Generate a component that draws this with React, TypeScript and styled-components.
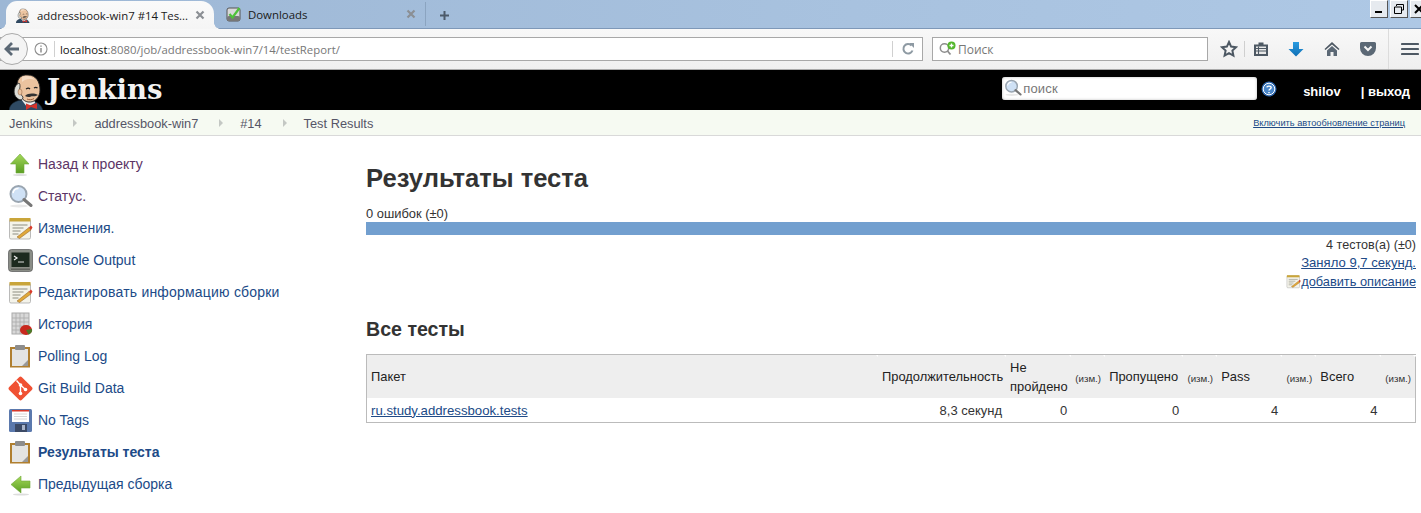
import React from "react";
import styled, { createGlobalStyle } from "styled-components";

const Global = createGlobalStyle`
  html, body { margin: 0; padding: 0; background: #fff; overflow: hidden; }
  body { font-family: "Liberation Sans", Arial, sans-serif; font-size: 13px; color: #333; }
  * { box-sizing: border-box; }
`;

const Page = styled.div`
  width: 1421px;
  height: 513px;
  overflow: hidden;
  display: flex;
  flex-direction: column;
`;

/* ---------- browser chrome ---------- */
const TabStrip = styled.div`
  height: 29px;
  flex: none;
  display: flex;
  align-items: flex-end;
  padding-left: 6px;
  background: linear-gradient(90deg, #9db7d5 0%, #a8c2df 60%, #aec8e5 100%);
  border-bottom: 1px solid #7e98b8;
  position: relative;
`;
const Tab = styled.div<{ $active?: boolean }>`
  position: relative;
  height: 28px;
  margin-bottom: ${(p) => (p.$active ? "-1px" : "0")};
  width: ${(p) => (p.$active ? "208px" : "199px")};
  margin-right: ${(p) => (p.$active ? "8px" : "0")};
  display: flex;
  align-items: center;
  padding-left: ${(p) => (p.$active ? "10px" : "4px")};
  padding-right: ${(p) => (p.$active ? "9px" : "5px")};
  gap: 6px;
  background: ${(p) => (p.$active ? "linear-gradient(#fafafa, #f5f5f5)" : "transparent")};
  border-radius: ${(p) => (p.$active ? "11px 13px 0 0" : "0")};
  font-family: "Open Sans", "Noto Sans", sans-serif;
  font-size: 11.4px;
  color: #1a1a1a;
  white-space: nowrap;
  ${(p) =>
    p.$active &&
    `
    &::before, &::after {
      content: "";
      position: absolute;
      bottom: 0;
      width: 6px;
      height: 6px;
    }
    &::before {
      left: -6px;
      background: radial-gradient(circle at 0 0, transparent 5.5px, #f5f5f5 6px);
    }
    &::after {
      right: -6px;
      background: radial-gradient(circle at 100% 0, transparent 5.5px, #f5f5f5 6px);
    }
  `}
`;
const TabTitle = styled.span`
  flex: 1;
`;
const TabDivider = styled.div`
  width: 1px;
  height: 24px;
  margin: 0 0 2px 4px;
  background: #8ba4c0;
`;
const NewTab = styled.div`
  width: 36px;
  height: 26px;
  display: flex;
  align-items: center;
  justify-content: center;
`;
const WindowControls = styled.div`
  position: absolute;
  top: 0;
  right: -7px;
  display: flex;
  gap: 2px;
`;
const WinBtn = styled.div`
  width: 18px;
  height: 18px;
  display: flex;
  align-items: center;
  justify-content: center;
  background: #e6eaef;
  border: 1px solid;
  border-color: #fff #555 #555 #fff;
`;
const NavBar = styled.div`
  height: 41px;
  flex: none;
  display: flex;
  align-items: center;
  background: linear-gradient(#f8f8f8, #efefef);
  border-bottom: 1px solid #a9a9a9;
  position: relative;
`;
const BackBtn = styled.div`
  position: absolute;
  left: -4px;
  top: 4px;
  width: 32px;
  height: 32px;
  border-radius: 50%;
  background: #f4f4f4;
  border: 1px solid #aaa;
  display: flex;
  align-items: center;
  justify-content: center;
  z-index: 1;
`;
const AddressBox = styled.div`
  width: 923px;
  height: 24px;
  background: #fff;
  border: 1px solid #a8a8a8;
  display: flex;
  align-items: center;
  padding-left: 33px;
  font-family: "Open Sans", "Noto Sans", sans-serif;
  font-size: 11.35px;
  color: #777;
`;
const InfoSlot = styled.div`
  width: 21px;
  height: 16px;
  display: flex;
  align-items: center;
  border-right: 1px solid #d0d0d0;
  margin-right: 5px;
  flex: none;
`;
const Host = styled.span`
  color: #111;
`;
const UrlText = styled.span`
  flex: 1;
`;
const ReloadSlot = styled.div`
  width: 30px;
  height: 16px;
  border-left: 1px solid #d0d0d0;
  display: flex;
  align-items: center;
  justify-content: center;
`;
const SearchBox = styled.div`
  margin-left: 9px;
  width: 276px;
  height: 24px;
  background: #fff;
  border: 1px solid #a8a8a8;
  display: flex;
  align-items: center;
  padding-left: 6px;
  gap: 1px;
  font-family: "Open Sans", "Noto Sans", sans-serif;
  font-size: 12px;
  color: #777;
`;
const ToolIcons = styled.div`
  display: flex;
  align-items: center;
  margin-left: 11px;
  height: 100%;
`;
const ToolSlot = styled.div<{ $w: number }>`
  width: ${(p) => p.$w}px;
  height: 20px;
  display: flex;
  align-items: center;
  justify-content: center;
`;
const MenuSlot = styled.div`
  width: 33px;
  height: 100%;
  display: flex;
  align-items: center;
  padding-left: 12px;
  border-left: 1px solid #dcdcdc;
`;
const ThinSep = styled.div`
  width: 1px;
  height: 16px;
  margin-left: 5px;
  background: #cfcfcf;
`;

/* ---------- jenkins header ---------- */
const Header = styled.div`
  height: 40px;
  flex: none;
  background: #000;
  display: flex;
  align-items: center;
  padding-left: 9px;
  color: #fff;
`;
const Logo = styled.div`
  width: 38px;
  height: 40px;
  flex: none;
  overflow: hidden;
`;
const Brand = styled.div`
  font-family: "DejaVu Serif", "Liberation Serif", serif;
  font-weight: 700;
  font-size: 27.5px;
  color: #f2f2f2;
  margin-top: -2px;
`;
const HeaderSearch = styled.div`
  margin-left: auto;
  width: 255px;
  height: 23px;
  margin-top: -4px;
  background: #fff;
  border-radius: 3px;
  box-shadow: inset 0 0 3px #bbb;
  display: flex;
  align-items: center;
  padding-left: 2px;
  gap: 1px;
  font-size: 13px;
  color: #777;
  letter-spacing: 0.2px;
`;
const HelpDot = styled.div`
  margin-left: 4px;
  width: 16px;
  height: 16px;
  margin-top: -2px;
  flex: none;
`;
const UserName = styled.a`
  margin-left: 26px;
  font-size: 13px;
  font-weight: 700;
  color: #fff;
  margin-top: 3px;
`;
const Logout = styled.a`
  margin-left: 20px;
  margin-right: 11px;
  margin-top: 3px;
  font-size: 13px;
  font-weight: 700;
  color: #fff;
`;

/* ---------- breadcrumbs ---------- */
const Crumbs = styled.div`
  height: 26px;
  flex: none;
  background: #f6faf2;
  border-bottom: 1px solid #d9d9d9;
  display: flex;
  align-items: center;
  padding: 1px 16px 0 9px;
`;
const Crumb = styled.span`
  font-size: 12.8px;
  color: #555566;
`;
const CrumbArrow = styled.span`
  width: 0;
  height: 0;
  margin: 0 17px 0 21px;
  border-left: 4px solid #c4c8c4;
  border-top: 4px solid transparent;
  border-bottom: 4px solid transparent;
`;
const AutoRefresh = styled.a`
  margin-left: auto;
  font-size: 9.25px;
  color: #204a87;
  text-decoration: underline;
`;

/* ---------- body ---------- */
const Body = styled.div`
  flex: 1;
  display: flex;
  min-height: 0;
`;
const Side = styled.nav`
  width: 366px;
  flex: none;
  padding: 12px 0 0 8px;
  display: flex;
  flex-direction: column;
`;
const SideItem = styled.div`
  height: 32px;
  display: flex;
  align-items: center;
  gap: 5px;
`;
const SideIcon = styled.div`
  width: 25px;
  height: 25px;
  flex: none;
`;
const SideLink = styled.a<{ $visited?: boolean; $bold?: boolean; $wide?: boolean }>`
  font-size: 14px;
  color: ${(p) => (p.$visited ? "#5c3566" : "#204a87")};
  font-weight: ${(p) => (p.$bold ? 700 : 400)};
  letter-spacing: ${(p) => (p.$wide ? "0.2px" : "0")};
`;
const Main = styled.main`
  flex: 1;
  padding: 27px 5px 0 0;
  min-width: 0;
`;
const Title = styled.h1`
  margin: 0 0 14px;
  font-size: 25.6px;
  line-height: 30px;
  font-weight: 700;
  color: #333;
`;
const Fails = styled.div`
  font-size: 12.9px;
  line-height: 14px;
  margin-bottom: 1px;
  color: #333;
`;
const Bar = styled.div`
  height: 13px;
  margin-bottom: -1px;
  background: #729fcf;
`;
const RightLine = styled.div<{ $top?: number }>`
  margin-top: ${(p) => p.$top ?? 3}px;
  height: 15px;
  display: flex;
  justify-content: flex-end;
  align-items: center;
  font-size: 12.6px;
  color: #333;
`;
const Lnk = styled.a<{ $size?: number }>`
  color: #204a87;
  text-decoration: underline;
  font-size: ${(p) => p.$size ?? 13}px;
`;
const H2 = styled.h2`
  margin: 28px 0 13px;
  font-size: 19.6px;
  line-height: 24px;
  font-weight: 700;
  color: #333;
`;
const Table = styled.table`
  width: 1050px;
  table-layout: fixed;
  border-collapse: collapse;
  border: 1px solid #bbb;
  font-size: 13px;
  color: #333;
`;
const Th = styled.th<{ $right?: boolean }>`
  background: #eee;
  height: 43px;
  padding: 1px 4px 0;
  font-weight: 400;
  font-size: 12.9px;
  line-height: 19px;
  text-align: ${(p) => (p.$right ? "right" : "left")};
  color: #222;
  position: relative;
  &::before {
    content: "";
    position: absolute;
    top: 0;
    right: -2px;
    border-left: 2px solid transparent;
    border-right: 2px solid transparent;
    border-top: 2px solid #fff;
  }
`;
const SmallTh = styled(Th)`
  font-size: 9.7px;
  white-space: nowrap;
  padding: 5px 2px 0;
  text-align: center;
  color: #333;
`;
const Td = styled.td<{ $right?: boolean }>`
  height: 25px;
  padding: 1px 4px 0;
  text-align: ${(p) => (p.$right ? "right" : "left")};
`;

/* ---------- icons ---------- */
const JenkinsHead = ({ size = 38 }: { size?: number }) => (
  <svg width={size} height={(size * 41) / 38} viewBox="0 0 38 41">
    <path d="M0 41C0 35 5 31 12 30L24 31C29 32 33 36 34 41Z" fill="#2f4a63" stroke="#16242f" strokeWidth=".6" />
    <path d="M12 29L18 37L26 33L25 29Z" fill="#eee" />
    <path d="M17 33.500L22 35.500L28 33V39L22 37L17 40Z" fill="#d5332b" />
    <path d="M9 20C6 9 12 4 19 5C27 5 31 12 31 20C31 27 26 33 19 32C14 31 11 27 9 20Z" fill="#ebc39f" stroke="#222" strokeWidth=".9" />
    <path d="M10 13C5 15 3 24 8 28C11 31 14 30 14 27C11 24 10 20 11 17C11 15 11 14 10 13Z" fill="#dcdcd6" stroke="#222" strokeWidth=".8" />
    <ellipse cx="11" cy="22" rx="2" ry="3" fill="#ebc39f" stroke="#8a5a3a" strokeWidth=".5" />
    <path d="M13 7C17 5 23 6 26 10C21 8 16 9 13 12Z" fill="#f5dcc4" />
    <path d="M17 19c1.500-1 3-1 4 0M25 18c1-.8 2.500-.8 3.500 0" stroke="#222" strokeWidth="1.200" fill="none" />
    <path d="M16 26C19 23 25 23 29 25C26 27 23 26 22 26.500C20 27.500 18 27 16 26Z" fill="#333" />
    <path d="M18 29c2 1 5 1 7-.5" stroke="#8a4a2a" strokeWidth=".8" fill="none" />
  </svg>
);
const ArrowUp = () => (
  <svg width="25" height="25" viewBox="0 0 25 25">
    <defs><linearGradient id="gu" x1="0" y1="0" x2="0" y2="1"><stop offset="0" stopColor="#a4d85a" /><stop offset="1" stopColor="#5a9e22" /></linearGradient></defs>
    <path d="M12 2L21 12H16V21H8V12H2.500z" fill="url(#gu)" stroke="#6ea83a" strokeWidth=".6" />
    <ellipse cx="12" cy="23" rx="7" ry="1" fill="#ddd" />
  </svg>
);
const ArrowLeft = () => (
  <svg width="25" height="25" viewBox="0 0 25 25">
    <defs><linearGradient id="gl" x1="0" y1="0" x2="0" y2="1"><stop offset="0" stopColor="#a4d85a" /><stop offset="1" stopColor="#5a9e22" /></linearGradient></defs>
    <path d="M3 12.500L13 4V9H22V16H13V21z" fill="url(#gl)" stroke="#6ea83a" strokeWidth=".6" />
    <ellipse cx="13" cy="22.500" rx="8" ry="1" fill="#ddd" />
  </svg>
);
const Magnifier = ({ size = 25 }: { size?: number }) => (
  <svg width={size} height={size} viewBox="0 0 25 25">
    <ellipse cx="11" cy="22" rx="9" ry="1.500" fill="#e8e8e8" />
    <circle cx="10.500" cy="10" r="8" fill="#cfe1f5" stroke="#9aa5b0" strokeWidth="2" />
    <path d="M5 9a5.500 5.500 0 0 1 5.500-4.500" stroke="#fff" strokeWidth="1.500" fill="none" />
    <path d="M16 15.500L23 21.500" stroke="#777" strokeWidth="3" strokeLinecap="round" />
  </svg>
);
const Notepad = ({ size = 25 }: { size?: number }) => (
  <svg width={size} height={size} viewBox="0 0 25 25">
    <rect x="1.500" y="3" width="21" height="20" rx="1.500" fill="#f4f3ea" stroke="#aaa" strokeWidth=".8" />
    <rect x="1.500" y="2" width="21" height="3.500" fill="#c9a53a" />
    <path d="M4.500 9h15M4.500 12h11M4.500 15h8M4.500 18h6" stroke="#8d8d80" strokeWidth="1" />
    <path d="M9 21L21 11.500l2 2.500L11.500 22.500z" fill="#e0a83a" stroke="#8a5a20" strokeWidth=".5" />
    <path d="M21 11.500l2 2.500 1.500-2.500-1.500-2z" fill="#d83a2a" />
  </svg>
);
const Terminal = () => (
  <svg width="25" height="25" viewBox="0 0 25 25">
    <rect x="0.500" y="1.500" width="24" height="22" rx="3" fill="#8a8d86" stroke="#555" strokeWidth=".7" />
    <rect x="3.500" y="4.500" width="18" height="14.500" fill="#1d2a1f" />
    <path d="M6 8l3 2-3 2" stroke="#eee" strokeWidth="1.200" fill="none" />
    <path d="M10 14h6" stroke="#ddd" strokeWidth="1" />
    <rect x="3" y="20.500" width="19" height="1.500" fill="#62645f" />
  </svg>
);
const HistoryIcon = () => (
  <svg width="25" height="25" viewBox="0 0 25 25">
    <rect x="4" y="1" width="17" height="21" fill="#d8d8d8" stroke="#aaa" />
    <path d="M4 6h17M4 10h17M4 14h17M4 18h17M8 1v21M12 1v21M16 1v21" stroke="#aaa" strokeWidth=".8" />
    <ellipse cx="18" cy="18" rx="6" ry="5" fill="#c8281e" />
    <path d="M18 18l6-1a6 5 0 0 1-3.500 5.500z" fill="#4a7a2a" />
  </svg>
);
const Clipboard = () => (
  <svg width="25" height="25" viewBox="0 0 25 25">
    <rect x="2" y="3" width="20" height="20.500" fill="#b07f2f" />
    <rect x="4" y="5" width="16" height="17" fill="#e4e4e2" />
    <path d="M14 22l6-6v6z" fill="#999" />
    <rect x="7" y="1" width="10" height="5" rx="1" fill="#8d8d8d" />
  </svg>
);
const GitIcon = () => (
  <svg width="25" height="25" viewBox="0 0 25 25">
    <rect x="3.500" y="3.500" width="18" height="18" rx="2" transform="rotate(45 12.500 12.500)" fill="#f05133" />
    <path d="M8.500 4.500l4 4.500M12.500 9v8M12.500 9l5 4.500" stroke="#fff" strokeWidth="1.400" fill="none" />
    <circle cx="12.500" cy="9" r="1.800" fill="#fff" />
    <circle cx="12.500" cy="17.500" r="1.800" fill="#fff" />
    <circle cx="17.500" cy="13.500" r="1.800" fill="#fff" />
  </svg>
);
const Floppy = () => (
  <svg width="25" height="25" viewBox="0 0 25 25">
    <rect x="1" y="1" width="23" height="23" rx="1.500" fill="#5b79ad" />
    <rect x="4" y="2" width="17" height="12" fill="#fff" />
    <rect x="4" y="2" width="17" height="1.500" fill="#d8392b" />
    <path d="M6 6h13M6 8.500h13M6 11h13" stroke="#ccc" strokeWidth=".8" />
    <rect x="7" y="16" width="12" height="8" fill="#3c4a66" />
    <rect x="14" y="17" width="3" height="5" fill="#a9b4c8" />
  </svg>
);
const Close = () => (
  <svg width="10" height="10" viewBox="0 0 10 10">
    <path d="M1.500 1.500l7 7M8.500 1.500l-7 7" stroke="#8b8f94" strokeWidth="2.200" />
  </svg>
);
const Plus = () => (
  <svg width="11" height="11" viewBox="0 0 11 11"><path d="M5.500 1v9M1 5.500h9" stroke="#4c5a6a" strokeWidth="2" /></svg>
);
const DownloadsCheck = () => (
  <svg width="16" height="16" viewBox="0 0 16 16">
    <rect x="1" y="2" width="13" height="13" rx="2" fill="#d8d8d8" stroke="#555" strokeWidth="1" />
    <rect x="1" y="10" width="13" height="5" rx="2" fill="#777" />
    <path d="M3.500 8l3 3.500L13.500 2" stroke="#4fc13a" strokeWidth="2.300" fill="none" />
  </svg>
);
const BackArrow = () => (
  <svg width="16" height="16" viewBox="0 0 16 16">
    <path d="M8 2L2 8l6 6M2.500 8H15" stroke="#5b6875" strokeWidth="2.800" fill="none" />
  </svg>
);
const Info = () => (
  <svg width="14" height="14" viewBox="0 0 14 14">
    <circle cx="7" cy="7" r="6" stroke="#8f8f8f" strokeWidth="1.100" fill="none" />
    <path d="M7 6v4.500M7 3.500v1.300" stroke="#8f8f8f" strokeWidth="1.500" />
  </svg>
);
const Reload = () => (
  <svg width="14" height="14" viewBox="0 0 14 14">
    <path d="M11.500 8.500A4.700 4.700 0 1 1 10.500 3.500" stroke="#8e9aa3" strokeWidth="2" fill="none" />
    <path d="M8 1h5v5z" fill="#8e9aa3" />
  </svg>
);
const FxSearch = () => (
  <svg width="18" height="16" viewBox="0 0 18 16">
    <circle cx="5.500" cy="7" r="4.200" stroke="#8d8d8d" strokeWidth="1.500" fill="none" />
    <path d="M8.500 10l3 3.500" stroke="#8d8d8d" strokeWidth="1.800" />
    <circle cx="12.500" cy="4.500" r="4" fill="#54b82c" />
    <path d="M12.500 2.500v4M10.500 4.500h4" stroke="#fff" strokeWidth="1.300" />
  </svg>
);
const Star = () => (
  <svg width="18" height="18" viewBox="0 0 18 18">
    <path d="M9 2l2.100 4.600 5 .6-3.700 3.400 1 5L9 13.100 4.600 15.600l1-5L1.900 7.200l5-.6z" fill="none" stroke="#4d5863" strokeWidth="2" />
  </svg>
);
const ListBoard = () => (
  <svg width="16" height="16" viewBox="0 0 16 16">
    <path d="M5.500 1.500h5V3.500H15V15H1V3.500h4.500z" fill="#4d5863" />
    <rect x="3" y="5.500" width="10" height="7.500" fill="#e8e8e8" />
    <path d="M3 7.500h10M3 10h10M5.500 5.500v7.500" stroke="#4d5863" strokeWidth="1.100" />
  </svg>
);
const Down = () => (
  <svg width="16" height="16" viewBox="0 0 16 16">
    <defs><linearGradient id="dl" x1="0" y1="0" x2="0" y2="1"><stop offset="0" stopColor="#2a9be0" /><stop offset="1" stopColor="#0f6fb5" /></linearGradient></defs>
    <path d="M5 1h6v7h4.500L8 15.500.5 8H5z" fill="url(#dl)" />
  </svg>
);
const Home = () => (
  <svg width="16" height="16" viewBox="0 0 16 16">
    <path d="M8 1L.5 8l1 1L8 3.500 14.500 9l1-1z" fill="#4d5863" />
    <path d="M8 5L3 9.500V15h3.500v-4h3v4H13V9.500z" fill="#5b6875" />
  </svg>
);
const Pocket = () => (
  <svg width="18" height="16" viewBox="0 0 18 16">
    <path d="M2.500 1h13A1.500 1.500 0 0 1 17 2.500V7a8 8 0 0 1-16 0V2.500A1.500 1.500 0 0 1 2.500 1z" fill="#5b6875" />
    <path d="M5.500 5.500L9 9l3.500-3.500" stroke="#f5f5f5" strokeWidth="2" fill="none" />
  </svg>
);
const Burger = () => (
  <svg width="18" height="14" viewBox="0 0 18 14"><path d="M1 2h16M1 7h16M1 12h16" stroke="#4d5863" strokeWidth="2.200" strokeLinecap="round" /></svg>
);
const HelpIcon = () => (
  <svg width="16" height="16" viewBox="0 0 16 16">
    <circle cx="8" cy="8" r="7.500" fill="#2a62a8" />
    <circle cx="8" cy="8" r="5.800" fill="#4a86c8" stroke="#fff" strokeWidth="1" />
    <path d="M5.800 6.300C6 4.800 10.200 4.600 10.200 6.600 10.200 8 8 8 8 9.500M8 11v1.200" stroke="#fff" strokeWidth="1.400" fill="none" />
  </svg>
);

const items: { icon: React.ReactNode; label: string; visited?: boolean; bold?: boolean; wide?: boolean }[] = [
  { icon: <ArrowUp />, label: "Назад к проекту", visited: true },
  { icon: <Magnifier />, label: "Статус.", visited: true },
  { icon: <Notepad />, label: "Изменения." },
  { icon: <Terminal />, label: "Console Output" },
  { icon: <Notepad />, label: "Редактировать информацию сборки", wide: true },
  { icon: <HistoryIcon />, label: "История" },
  { icon: <Clipboard />, label: "Polling Log" },
  { icon: <GitIcon />, label: "Git Build Data" },
  { icon: <Floppy />, label: "No Tags" },
  { icon: <Clipboard />, label: "Результаты теста", bold: true },
  { icon: <ArrowLeft />, label: "Предыдущая сборка" },
];

export default function App() {
  return (
    <Page>
      <Global />
      <TabStrip>
        <Tab $active>
          <JenkinsHead size={15} />
          <TabTitle>addressbook-win7 #14 Tes...</TabTitle>
          <Close />
        </Tab>
        <Tab>
          <DownloadsCheck />
          <TabTitle>Downloads</TabTitle>
          <Close />
        </Tab>
        <TabDivider />
        <NewTab><Plus /></NewTab>
        <WindowControls>
          <WinBtn><svg width="10" height="10" viewBox="0 0 10 10"><path d="M1 8h7" stroke="#000" strokeWidth="2" /></svg></WinBtn>
          <WinBtn><svg width="12" height="12" viewBox="0 0 12 12"><path d="M3.500 3V1.500h7V7H8.500M1.500 4h7v6.500h-7z" stroke="#000" fill="none" /></svg></WinBtn>
          <WinBtn><svg width="10" height="10" viewBox="0 0 10 10"><path d="M1 1l8 8M9 1l-8 8" stroke="#000" strokeWidth="2" /></svg></WinBtn>
        </WindowControls>
      </TabStrip>
      <NavBar>
        <BackBtn><BackArrow /></BackBtn>
        <AddressBox>
          <InfoSlot><Info /></InfoSlot>
          <UrlText><Host>localhost</Host>:8080/job/addressbook-win7/14/testReport/</UrlText>
          <ReloadSlot><Reload /></ReloadSlot>
        </AddressBox>
        <SearchBox><FxSearch />Поиск</SearchBox>
        <ToolIcons>
          <ToolSlot $w={20}><Star /></ToolSlot>
          <ThinSep />
          <ToolSlot $w={31}><ListBoard /></ToolSlot>
          <ToolSlot $w={40}><Down /></ToolSlot>
          <ToolSlot $w={31}><Home /></ToolSlot>
          <ToolSlot $w={41}><Pocket /></ToolSlot>
          <MenuSlot><Burger /></MenuSlot>
        </ToolIcons>
      </NavBar>
      <Header>
        <Logo><JenkinsHead /></Logo>
        <Brand>Jenkins</Brand>
        <HeaderSearch><Magnifier size={18} />поиск</HeaderSearch>
        <HelpDot><HelpIcon /></HelpDot>
        <UserName>shilov</UserName>
        <Logout>| выход</Logout>
      </Header>
      <Crumbs>
        <Crumb>Jenkins</Crumb><CrumbArrow />
        <Crumb>addressbook-win7</Crumb><CrumbArrow />
        <Crumb>#14</Crumb><CrumbArrow />
        <Crumb>Test Results</Crumb>
        <AutoRefresh>Включить автообновление страниц</AutoRefresh>
      </Crumbs>
      <Body>
        <Side>
          {items.map((it) => (
            <SideItem key={it.label}>
              <SideIcon>{it.icon}</SideIcon>
              <SideLink $visited={it.visited} $bold={it.bold} $wide={it.wide}>{it.label}</SideLink>
            </SideItem>
          ))}
        </Side>
        <Main>
          <Title>Результаты теста</Title>
          <Fails>0 ошибок (±0)</Fails>
          <Bar />
          <RightLine>4 тестов(а) (±0)</RightLine>
          <RightLine><Lnk $size={13.1}>Заняло 9,7 секунд.</Lnk></RightLine>
          <RightLine $top={4}><Notepad size={15} /><Lnk $size={12.8}>добавить описание</Lnk></RightLine>
          <H2>Все тесты</H2>
          <Table>
            <colgroup>
              <col style={{ width: 511 }} />
              <col style={{ width: 128 }} />
              <col style={{ width: 65 }} />
              <col style={{ width: 34 }} />
              <col style={{ width: 78 }} />
              <col style={{ width: 34 }} />
              <col style={{ width: 65 }} />
              <col style={{ width: 34 }} />
              <col style={{ width: 65 }} />
              <col style={{ width: 34 }} />
            </colgroup>
            <thead>
              <tr>
                <Th>Пакет</Th>
                <Th $right>Продолжительность</Th>
                <Th>Не пройдено</Th>
                <SmallTh>(изм.)</SmallTh>
                <Th>Пропущено</Th>
                <SmallTh>(изм.)</SmallTh>
                <Th>Pass</Th>
                <SmallTh>(изм.)</SmallTh>
                <Th>Всего</Th>
                <SmallTh>(изм.)</SmallTh>
              </tr>
            </thead>
            <tbody>
              <tr>
                <Td><Lnk $size={13.2}>ru.study.addressbook.tests</Lnk></Td>
                <Td $right>8,3 секунд</Td>
                <Td $right>0</Td>
                <Td />
                <Td $right>0</Td>
                <Td />
                <Td $right>4</Td>
                <Td />
                <Td $right>4</Td>
                <Td />
              </tr>
            </tbody>
          </Table>
        </Main>
      </Body>
    </Page>
  );
}
